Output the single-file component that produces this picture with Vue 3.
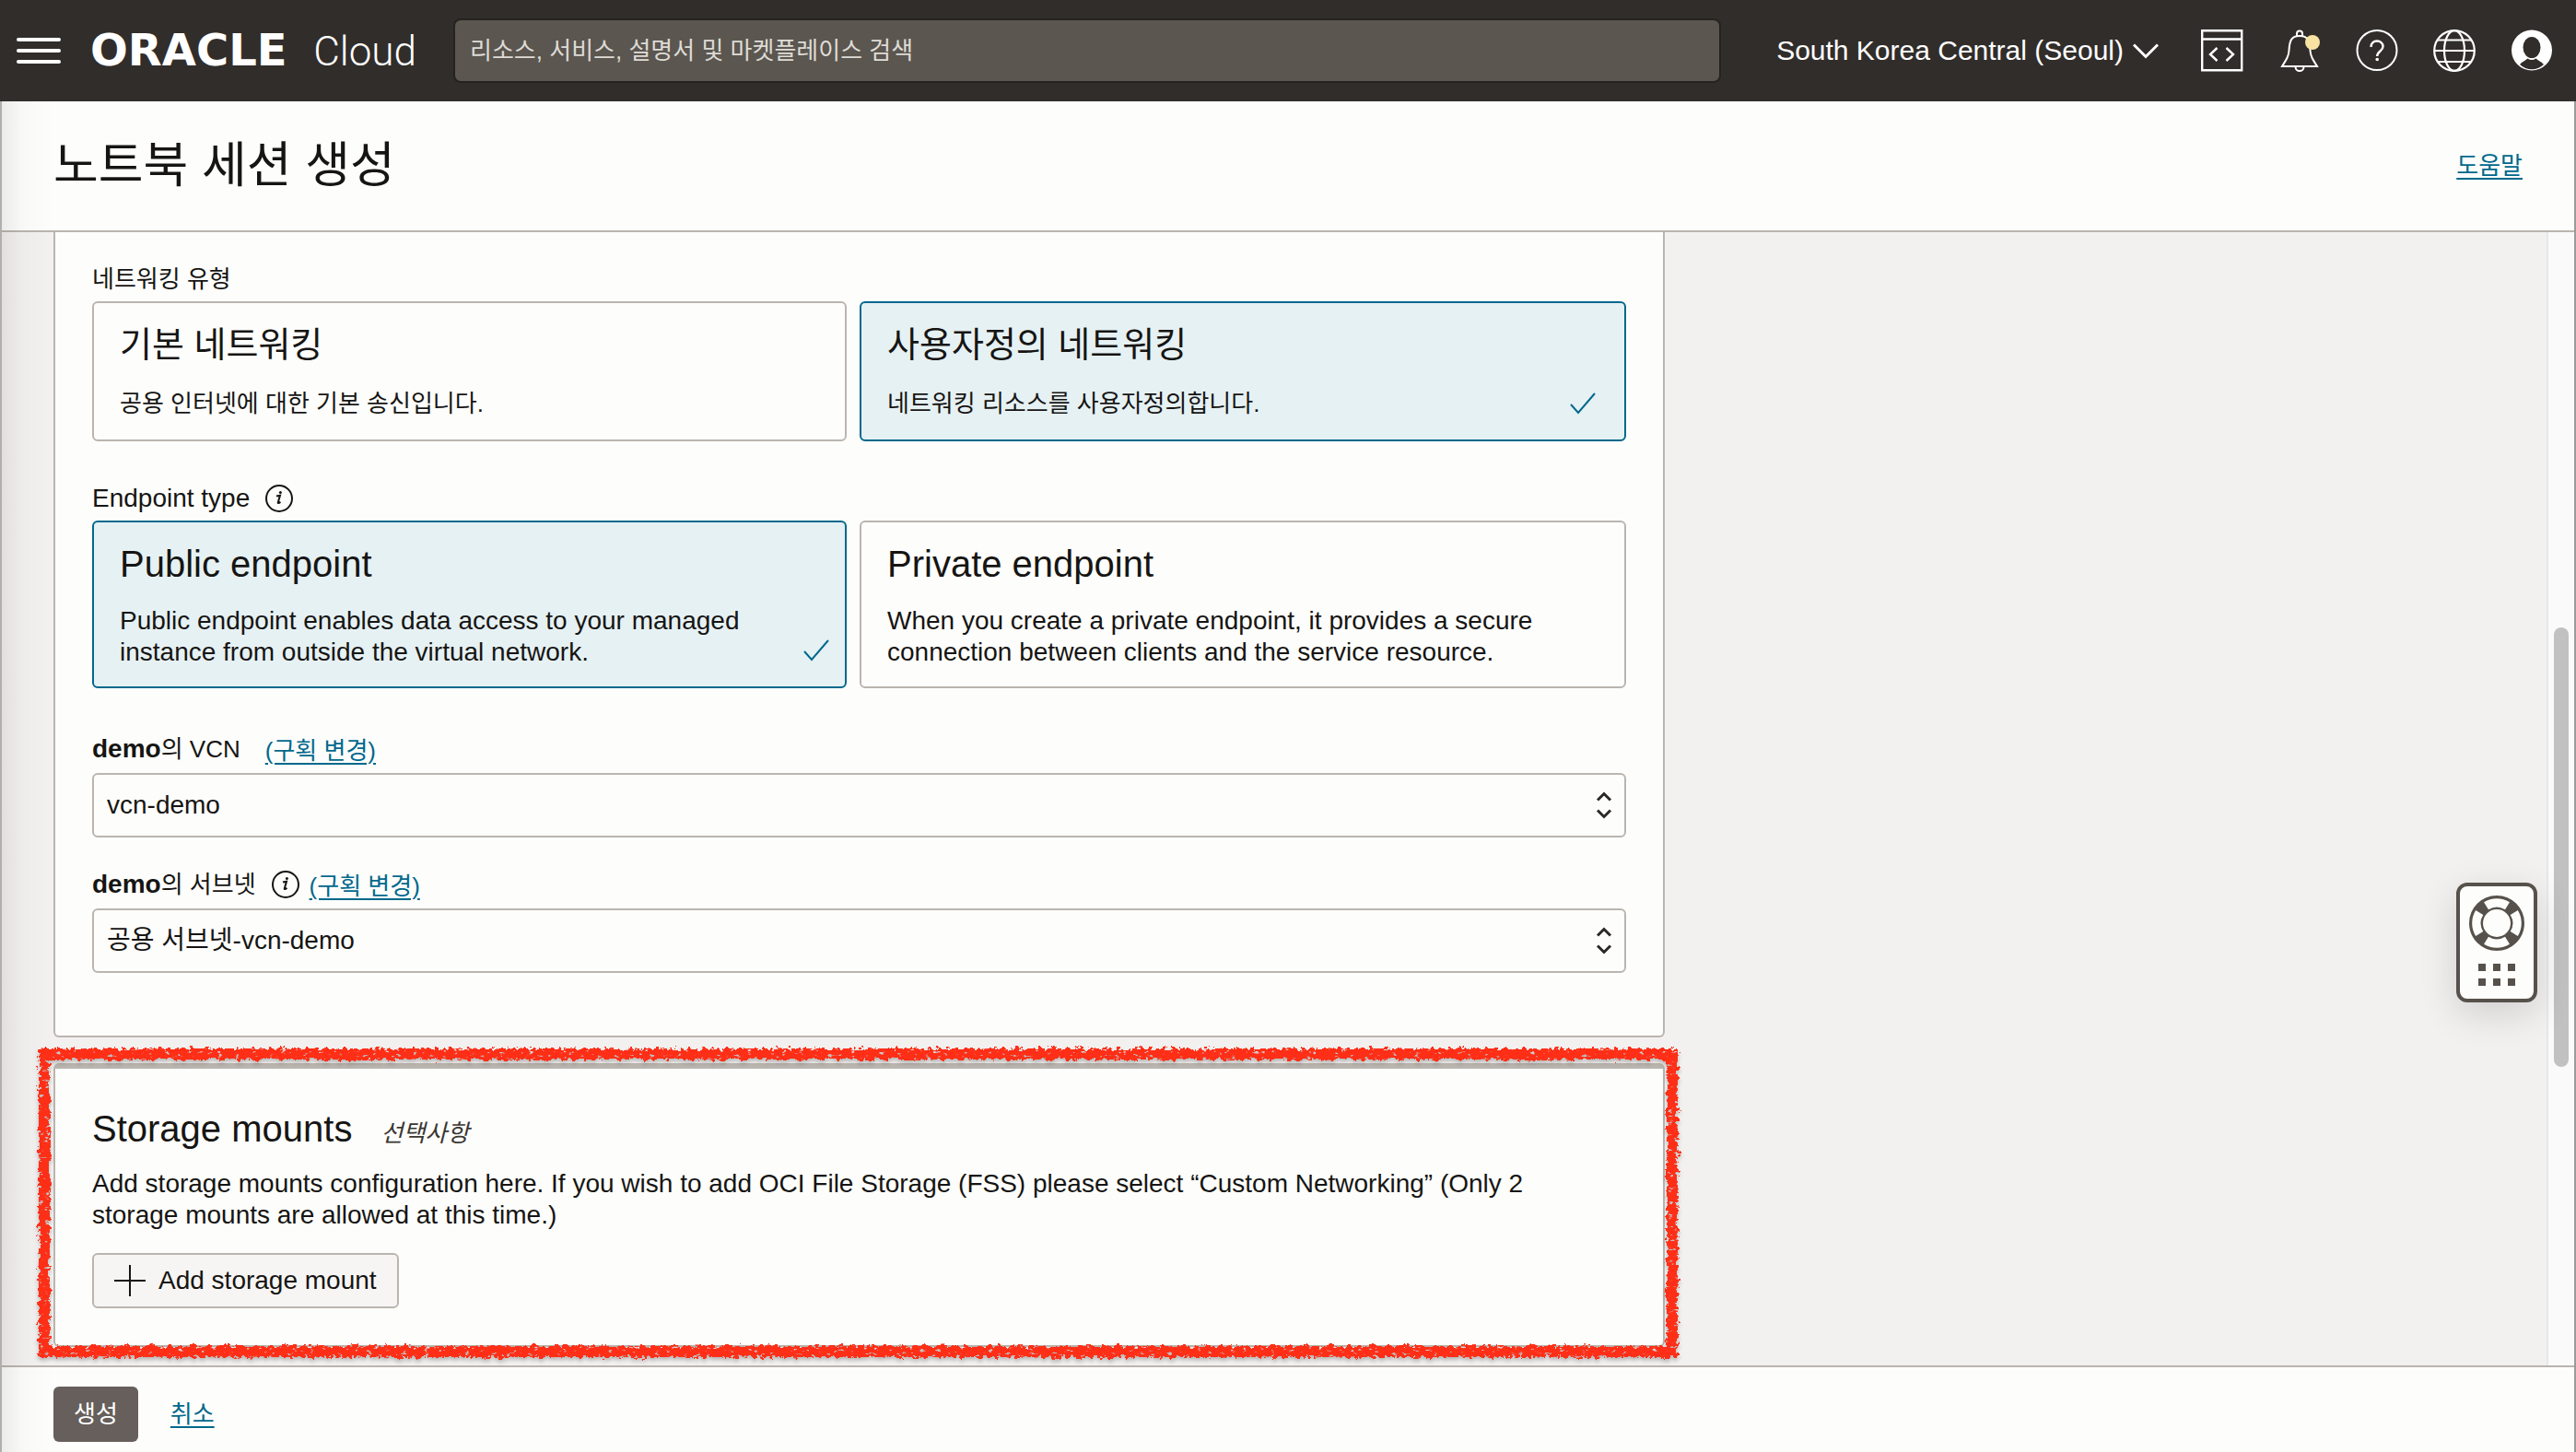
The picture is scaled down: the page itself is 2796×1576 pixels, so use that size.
<script setup>
import { ref } from 'vue'

const networking = ref('custom')
const endpoint = ref('public')

const networkingOptions = [
  { id: 'default', title: '기본 네트워킹', text: '공용 인터넷에 대한 기본 송신입니다.' },
  { id: 'custom', title: '사용자정의 네트워킹', text: '네트워킹 리소스를 사용자정의합니다.' },
]
const endpointOptions = [
  {
    id: 'public',
    title: 'Public endpoint',
    text: 'Public endpoint enables data access to your managed instance from outside the virtual network.',
  },
  {
    id: 'private',
    title: 'Private endpoint',
    text: 'When you create a private endpoint, it provides a secure connection between clients and the service resource.',
  },
]
</script>

<template>
  <div class="app">
    <header class="topbar">
      <button class="icon-btn menu" aria-label="Menu">
        <svg width="48" height="28" viewBox="0 0 48 28" fill="#fff">
          <rect width="48" height="4" rx="2" />
          <rect y="12" width="48" height="4" rx="2" />
          <rect y="24" width="48" height="4" rx="2" />
        </svg>
      </button>
      <a class="brand" href="#"><span class="brand-name">ORACLE</span><span class="brand-product">Cloud</span></a>
      <input class="search" type="search" lang="ko" aria-label="검색" placeholder="리소스, 서비스, 설명서 및 마켓플레이스 검색" />
      <button class="region">
        South Korea Central (Seoul)
        <svg width="28" height="17" viewBox="0 0 28 17" fill="none" stroke="#fff" stroke-width="3"><path d="M1 1.5l13 13 13-13" /></svg>
      </button>
      <nav class="tools">
        <button class="icon-btn" aria-label="Developer tools">
          <svg width="46" height="46" viewBox="0 0 46 46" fill="none" stroke="#fff" stroke-width="2.4">
            <path d="M1.200 1.200h43v43h-43zM1.200 10.500h43M17.500 20l-7.500 7 7.500 7M27.500 20l7.500 7-7.500 7" />
          </svg>
        </button>
        <button class="icon-btn" aria-label="Notifications">
          <svg width="46" height="46" viewBox="0 0 46 46" fill="none" stroke="#fff" stroke-width="2">
            <path d="M4 40h38c-5-8-7-11-7.500-17C34 12 32 7 23 7S12 12 11.500 23C11 29 9 32 4 40z" />
            <path d="M20 7V4.500a3 3 0 0 1 6 0V7M18.500 40.500a4.500 4.500 0 0 0 9 0" />
            <circle cx="37" cy="14" r="8" fill="#f9e3a3" stroke="none" />
          </svg>
        </button>
        <button class="icon-btn" aria-label="Help">
          <svg width="46" height="46" viewBox="0 0 46 46" fill="none" stroke="#fff" stroke-width="2">
            <circle cx="23" cy="22.500" r="21.500" />
            <path d="M16.500 19c0-4.500 3-6.500 6.500-6.500s6.500 2.500 6.500 6c0 5-6.300 5-6.300 10.500" stroke-width="2.400" />
            <circle cx="23.200" cy="32.500" r="1.800" fill="#fff" stroke="none" />
          </svg>
        </button>
        <button class="icon-btn" aria-label="Language">
          <svg width="46" height="46" viewBox="0 0 46 46" fill="none" stroke="#fff" stroke-width="2.200">
            <circle cx="23" cy="23" r="21.800" />
            <ellipse cx="23" cy="23" rx="11" ry="21.800" />
            <path d="M1 23h44M4.500 11.500h37M4.500 35h37" />
          </svg>
        </button>
        <button class="icon-btn" aria-label="Profile">
          <svg width="46" height="46" viewBox="0 0 46 46">
            <circle cx="23" cy="22.500" r="22" fill="#fff" />
            <ellipse cx="23" cy="19.500" rx="9.500" ry="11.500" fill="#312d2a" />
            <path d="M10 38c3-3.500 6-4 8.500-6.500 3 2 6 2 9 0 2.500 2.500 5.500 3 8.500 6.500-7.500 7-18.500 7-26 0z" fill="#312d2a" />
          </svg>
        </button>
      </nav>
    </header>

    <div class="window">
      <div class="titlebar" lang="ko">
        <h1>노트북 세션 생성</h1>
        <a href="#">도움말</a>
      </div>

      <main class="main">
        <div class="content">
          <section class="panel network">
            <div id="net-label" class="label" lang="ko">네트워킹 유형</div>
            <div class="cards" role="radiogroup" aria-labelledby="net-label" lang="ko">
              <label v-for="o in networkingOptions" :key="o.id" class="card" :class="{ selected: networking === o.id }">
                <input v-model="networking" type="radio" name="networking" :value="o.id" />
                <span class="card-title">{{ o.title }}</span>
                <span class="card-text">{{ o.text }}</span>
                <svg v-if="networking === o.id" class="check" width="28" height="24" viewBox="0 0 28 24"><path d="M1 13l8 9L27 1" /></svg>
              </label>
            </div>

            <div id="end-label" class="label second">
              <span class="label-text">Endpoint type</span>
              <svg class="info" width="30" height="30" viewBox="0 0 30 30"><circle cx="15" cy="15" r="14" /><path d="M12 12.500l4-.8-2.200 7.600c-.2 1 .6 1.200 2.600-.6" /><circle class="dot" cx="16.400" cy="8.500" r="1.500" /></svg>
            </div>
            <div class="cards" role="radiogroup" aria-labelledby="end-label">
              <label v-for="o in endpointOptions" :key="o.id" class="card" :class="{ selected: endpoint === o.id }">
                <input v-model="endpoint" type="radio" name="endpoint" :value="o.id" />
                <span class="card-title">{{ o.title }}</span>
                <span class="card-text">{{ o.text }}</span>
                <svg v-if="endpoint === o.id" class="check" width="28" height="24" viewBox="0 0 28 24"><path d="M1 13l8 9L27 1" /></svg>
              </label>
            </div>

            <div class="label vcn" lang="ko">
              <label class="label-text wide" for="vcn"><b>demo</b>의 VCN</label>
              <a href="#">(구획 변경)</a>
            </div>
            <div class="picker">
              <select id="vcn"><option>vcn-demo</option></select>
              <svg width="18" height="30" viewBox="0 0 18 30"><path d="M2 9.500l7-7 7 7M2 20.500l7 7 7-7" /></svg>
            </div>

            <div class="label subnet" lang="ko">
              <label class="label-text" for="subnet"><b>demo</b>의 서브넷</label>
              <svg class="info" width="30" height="30" viewBox="0 0 30 30"><circle cx="15" cy="15" r="14" /><path d="M12 12.500l4-.8-2.200 7.600c-.2 1 .6 1.200 2.600-.6" /><circle class="dot" cx="16.400" cy="8.500" r="1.500" /></svg>
              <a href="#">(구획 변경)</a>
            </div>
            <div class="picker">
              <select id="subnet"><option>공용 서브넷-vcn-demo</option></select>
              <svg width="18" height="30" viewBox="0 0 18 30"><path d="M2 9.500l7-7 7 7M2 20.500l7 7 7-7" /></svg>
            </div>
          </section>

          <section class="panel storage">
            <h2>Storage mounts <em lang="ko">선택사항</em></h2>
            <p>Add storage mounts configuration here. If you wish to add OCI File Storage (FSS) please select “Custom Networking” (Only 2 storage mounts are allowed at this time.)</p>
            <button class="add">
              <svg width="34" height="34" viewBox="0 0 34 34" stroke="#161513" stroke-width="2"><path d="M17 0v34M0 17h34" /></svg>
              Add storage mount
            </button>
            <div class="highlight" aria-hidden="true"></div>
          </section>
        </div>

        <div class="scrollbar"><div class="thumb"></div></div>

        <button class="support" aria-label="Support">
          <svg width="60" height="100" viewBox="0 0 60 100" fill="#57514c">
            <circle cx="30" cy="30" r="22.500" fill="none" stroke="#57514c" stroke-width="15" />
            <g fill="none" stroke="#fdfdfb" stroke-width="9.500">
              <path d="M18.500 11.200a22 22 0 0 1 23 0" />
              <path d="M18.500 48.800a22 22 0 0 0 23 0" />
              <path d="M11.200 18.500a22 22 0 0 0 0 23" />
              <path d="M48.800 18.500a22 22 0 0 1 0 23" />
            </g>
            <path d="M10 74h8v8h-8zM26 74h8v8h-8zM42 74h8v8h-8zM10 90h8v8h-8zM26 90h8v8h-8zM42 90h8v8h-8z" />
          </svg>
        </button>
      </main>

      <footer class="actions" lang="ko">
        <button class="create">생성</button>
        <a href="#">취소</a>
      </footer>
    </div>

    <!-- Rough crayon edge for the highlight frame -->
    <svg class="defs" width="0" height="0" aria-hidden="true">
      <filter id="crayon" x="-2%" y="-5%" width="104%" height="110%" color-interpolation-filters="sRGB">
        <feTurbulence type="fractalNoise" baseFrequency="0.2" numOctaves="3" seed="4" result="n" />
        <feDisplacementMap in="SourceGraphic" in2="n" scale="10" xChannelSelector="R" yChannelSelector="G" result="d" />
        <feTurbulence type="fractalNoise" baseFrequency="0.16 0.3" numOctaves="2" seed="9" />
        <feColorMatrix values="0 0 0 0 0  0 0 0 0 0  0 0 0 0 0  8 0 0 0 -1.8" result="holes" />
        <feComposite in="d" in2="holes" operator="in" result="ink" />
        <feDropShadow in="ink" dx="0" dy="3" stdDeviation="2" flood-color="#000" flood-opacity="0.25" />
      </filter>
    </svg>
  </div>
</template>

<style>
body {
  margin: 0;
}
</style>

<style scoped>
.app {
  min-height: 100vh;
  display: flex;
  flex-direction: column;
  background: #fdfdfb;
  color: #161513;
  font-family: "Liberation Sans", "Noto Sans CJK KR", sans-serif;
  font-size: 28px;
  line-height: 34px;
}
.app *,
.app *::before {
  box-sizing: border-box;
}
[lang="ko"] {
  font-size: 26px;
}
button,
input,
select {
  font: inherit;
  color: inherit;
}
button {
  cursor: pointer;
}
a {
  color: #00688c;
  text-underline-offset: 4px;
  text-decoration-thickness: 2px;
}
.defs {
  position: absolute;
}

/* Top bar */
.topbar {
  display: flex;
  align-items: center;
  height: 110px;
  padding: 0 25px 0 18px;
  background: #312d2a;
  color: #fff;
}
.icon-btn {
  display: flex;
  padding: 0;
  border: 0;
  background: none;
}
.menu {
  margin-right: 32px;
}
.brand {
  display: flex;
  align-items: baseline;
  justify-content: space-between;
  width: 354px;
  margin-right: 40px;
  color: #fff;
  text-decoration: none;
  line-height: 48px;
}
.brand-name {
  font-family: "DejaVu Sans", sans-serif;
  font-weight: 700;
  font-size: 48px;
}
.brand-product {
  font-family: Roboto, sans-serif;
  font-weight: 300;
  font-size: 44px;
}
.search {
  flex: 1;
  min-width: 0;
  height: 70px;
  padding: 0 16px;
  border: 2px solid #26221f;
  border-radius: 8px;
  background: #5b564f;
  color: #fff;
}
.topbar .search {
  font-size: 26px;
}
.search::placeholder {
  color: #dedbd6;
  opacity: 1;
}
.region {
  display: flex;
  align-items: center;
  gap: 10px;
  margin: 0 46px 0 60px;
  padding: 0;
  border: 0;
  background: none;
  font-size: 30px;
  white-space: nowrap;
}
.tools {
  display: flex;
  gap: 38px;
}

/* Window body */
.window {
  position: relative;
  flex: 1;
  display: flex;
  flex-direction: column;
  border-left: 2px solid #b3aeaa;
  border-right: 2px solid #9d9a98;
}
.window::before {
  content: "";
  position: absolute;
  inset: 0 auto 0 0;
  width: 56px;
  background: linear-gradient(90deg, rgba(0, 0, 0, 0.07), rgba(0, 0, 0, 0.02) 40%, rgba(0, 0, 0, 0));
  pointer-events: none;
  z-index: 1;
}
.titlebar {
  display: flex;
  align-items: center;
  justify-content: space-between;
  height: 142px;
  padding: 0 56px;
  border-bottom: 2px solid #bab5af;
}
h1 {
  margin: 0;
  font-size: 53px;
  font-weight: 400;
  line-height: 64px;
}
.main {
  position: relative;
  flex: 1;
  display: flex;
  background: #f3f1f0;
}
.content {
  flex: 1;
  padding: 0 56px 20px;
}
.panel {
  position: relative;
  width: 66%;
  padding: 40px;
  border: 2px solid #bab5af;
  border-radius: 6px;
  background: #fdfdfb;
}
.network {
  padding: 33px 40px 68px;
  border-top: 0;
  border-radius: 0 0 6px 6px;
}
.label {
  display: flex;
  align-items: center;
  height: 36px;
  margin-bottom: 6px;
}
.label.second {
  margin-top: 44px;
}
.label.vcn {
  margin-top: 48px;
  margin-bottom: 8px;
}
.label.subnet {
  margin-top: 33px;
  margin-bottom: 8px;
}
.label-text {
  margin-right: 17px;
}
.label-text.wide {
  margin-right: 27px;
}
.label b {
  font-size: 28px;
}
.label a {
  padding-top: 3px;
}
.info {
  margin-right: 11px;
  fill: none;
  stroke: #161513;
  stroke-width: 2;
}
.info .dot {
  fill: #161513;
  stroke: none;
}
.cards {
  display: grid;
  grid-template-columns: 819fr 832fr;
  gap: 14px;
}
.card {
  position: relative;
  display: flex;
  flex-direction: column;
  gap: 20px;
  padding: 20px 28px;
  border: 2px solid #bab5af;
  border-radius: 6px;
}
.card.selected {
  border-color: #00688c;
  background: #e6f1f4;
}
.card input {
  position: absolute;
  opacity: 0;
  margin: 0;
}
.card-title {
  font-size: 40px;
  line-height: 50px;
}
.card-text {
  max-width: 730px;
}
.card-title:lang(ko) {
  font-size: 38px;
}
.card-text:lang(ko) {
  line-height: 38px;
}
.check {
  position: absolute;
  right: 17px;
  bottom: 27px;
  fill: none;
  stroke: #00688c;
  stroke-width: 2;
}
.cards:lang(ko) .check {
  right: 31px;
}
.picker {
  position: relative;
}
.picker select {
  appearance: none;
  display: block;
  width: 100%;
  height: 70px;
  padding: 0 56px 0 14px;
  border: 2px solid #bab5af;
  border-radius: 6px;
  background: #fdfdfb;
}
.picker svg {
  position: absolute;
  right: 15px;
  top: 20px;
  fill: none;
  stroke: #2b2826;
  stroke-width: 3;
  pointer-events: none;
}
.storage {
  margin-top: 28px;
  border-top-width: 6px;
}
h2 {
  margin: 0 0 18px;
  font-size: 40px;
  font-weight: 400;
  line-height: 50px;
}
h2 em {
  margin-left: 20px;
  color: #3a3632;
  line-height: 34px;
}
p {
  max-width: 1600px;
  margin: 0 0 24px;
}
.add {
  display: flex;
  align-items: center;
  gap: 14px;
  height: 60px;
  padding: 0 22px;
  border: 2px solid #bab5af;
  border-radius: 6px;
  background: #f7f5f4;
}
.highlight {
  position: absolute;
  inset: -22px -16px -13px -18px;
  border: 12px solid #ff2f17;
  filter: url(#crayon);
  pointer-events: none;
}

/* Scroll track */
.scrollbar {
  display: grid;
  grid-template-rows: 429fr 477fr 324fr;
  width: 30px;
  padding: 0 6px;
  border-left: 2px solid #e8e7e7;
  background: #fafafa;
}
.thumb {
  grid-row: 2;
  border-radius: 8px;
  background: #c1c1c1;
}
.support {
  position: absolute;
  right: 40px;
  bottom: 394px;
  display: flex;
  padding: 10px;
  height: 130px;
  border: 4px solid #57514c;
  border-radius: 12px;
  background: #fdfdfb;
  box-shadow: 0 12px 40px rgba(0, 0, 0, 0.14);
}

/* Footer */
.actions {
  display: flex;
  align-items: center;
  gap: 35px;
  height: 94px;
  padding: 10px 56px 0;
  border-top: 2px solid #bab5af;
}
.create {
  height: 60px;
  padding: 0 22px;
  border: 0;
  border-radius: 6px;
  background: #665f5b;
  color: #fff;
}
</style>
